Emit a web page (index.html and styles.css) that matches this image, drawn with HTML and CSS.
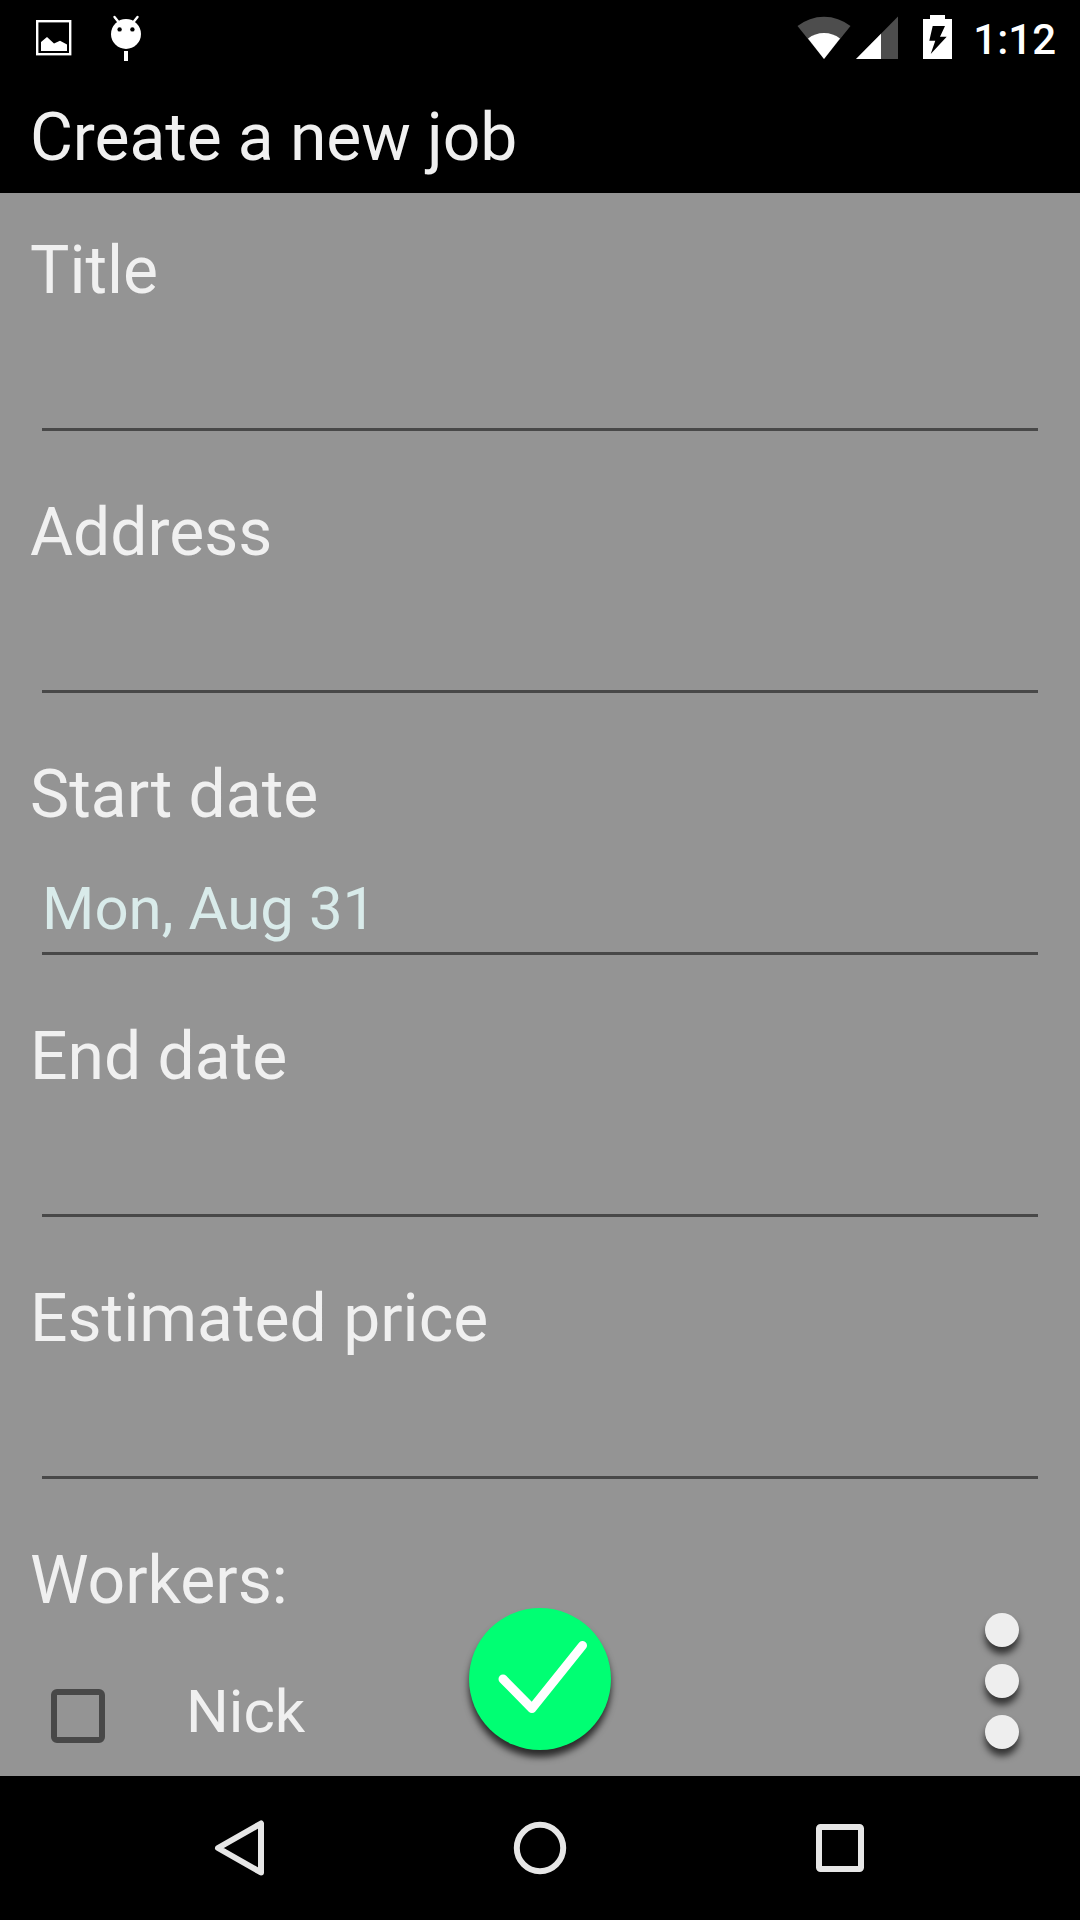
FILE: index.html
```html
<!DOCTYPE html>
<html lang="en">
<head>
  <meta charset="UTF-8">
  <meta name="viewport" content="width=device-width, initial-scale=1.0">
  <title>Create a new job</title>
  <link rel="stylesheet" href="styles.css">
</head>
<body>
  <div class="status-bar">
    <div class="status-icons">
      <svg width="36" height="72" viewBox="0 0 36 72">
        <rect x="1.2" y="21.2" width="33" height="33" fill="none" stroke="#fff" stroke-width="2.4"/>
        <path d="M5 51V42l6-5 7 6.5 6-2.8 7 3.8V51z" fill="#fff"/>
      </svg>
      <svg width="32" height="72" viewBox="0 0 32 72">
        <path d="M4.5 17l4 5M27.5 17l-4 5" stroke="#fff" stroke-width="2.4" stroke-linecap="round"/>
        <circle cx="16" cy="34" r="15" fill="#fff"/>
        <circle cx="9.6" cy="29.4" r="2.2"/>
        <circle cx="22.4" cy="29.4" r="2.2"/>
        <path d="M14 51h4v10h-4z" fill="#fff"/>
      </svg>
    </div>
    <div class="status-system">
      <svg width="54" height="72" viewBox="0 0 54 72">
        <path d="M27 59L.5 26a43 43 0 0 1 53 0z" fill="#4d4d4d"/>
        <path d="M27 59L11 38.500a26 26 0 0 1 32 0z" fill="#fff"/>
      </svg>
      <svg width="42" height="72" viewBox="0 0 42 72">
        <path d="M0 59L42 16.5V59z" fill="#4d4d4d"/>
        <path d="M0 59l25-25.3V59z" fill="#fff"/>
      </svg>
      <svg class="battery" width="29" height="72" viewBox="0 0 29 72">
        <path d="M0 19h7v-4h15v4h7v40H0z" fill="#fff"/>
        <path d="M9.7 26H22l-5 10.700h6.700L7.700 54l4.600-13.300h-6z"/>
      </svg>
      <span class="clock">1:12</span>
    </div>
  </div>

  <header class="title-bar">
    <h1>Create a new job</h1>
  </header>

  <main class="form">
    <div class="field">
      <label>Title</label>
      <div class="input"></div>
    </div>
    <div class="field">
      <label>Address</label>
      <div class="input"></div>
    </div>
    <div class="field">
      <label>Start date</label>
      <div class="input">Mon, Aug 31</div>
    </div>
    <div class="field">
      <label>End date</label>
      <div class="input"></div>
    </div>
    <div class="field">
      <label>Estimated price</label>
      <div class="input"></div>
    </div>
    <div class="workers">
      <label>Workers:</label>
      <div class="worker">
        <span class="checkbox"></span>
        <span class="worker-name">Nick</span>
      </div>
    </div>

    <!-- floating actions -->
    <button class="fab" aria-label="Save">
      <svg width="142" height="142" viewBox="0 0 142 142">
        <path d="M34 71l29 29.500L113.500 37.500" fill="none" stroke="#fff" stroke-width="9" stroke-linecap="round" stroke-linejoin="round"/>
      </svg>
    </button>
    <div class="more">
      <span></span>
      <span></span>
      <span></span>
    </div>
  </main>

  <nav class="nav-bar">
    <svg width="60" height="60" viewBox="0 0 60 60">
      <path d="M51 5.500V54.500L8 30z"/>
    </svg>
    <svg width="60" height="60" viewBox="0 0 60 60">
      <circle cx="30" cy="30" r="23.200"/>
    </svg>
    <svg width="60" height="60" viewBox="0 0 60 60">
      <rect x="9" y="9" width="42" height="42" rx="1.500"/>
    </svg>
  </nav>
</body>
</html>
```
FILE: styles.css
```css
* { margin: 0; padding: 0; box-sizing: border-box; }
body {
  font-family: Roboto, sans-serif;
  background: #000;
  color: #f0f0f0;
  width: 1080px;
  height: 1920px;
  display: flex;
  flex-direction: column;
  overflow: hidden;
}
svg { display: block; }

.status-bar {
  height: 72px;
  padding: 0 24px 0 36px;
  display: flex;
  justify-content: space-between;
}
.status-icons { display: flex; gap: 38px; }
.status-system { display: flex; gap: 5px; }
.battery { margin-left: 20px; }
.clock {
  margin-left: 16px;
  color: #fff;
  font-size: 42px;
  font-weight: 500;
  line-height: 80px;
}

.title-bar {
  height: 121px;
  padding: 27px 30px 0;
}
h1 {
  font-size: 66px;
  font-weight: 400;
  line-height: 78px;
  letter-spacing: -0.1px;
}

.form {
  position: relative;
  height: 1583px;
  background: #949494;
}
.field { padding: 39px 30px 24px; }
label {
  display: block;
  font-size: 66px;
  line-height: 78px;
}
.input {
  height: 121px;
  margin: 0 12px;
  padding-top: 39px;
  border-bottom: 3px solid #484848;
  color: #d9ebea;
  font-size: 60px;
  line-height: 72px;
}

.workers { padding: 39px 30px 0; }
.worker {
  display: flex;
  align-items: flex-start;
  padding: 56px 0 0 21px;
}
.checkbox {
  width: 54px;
  height: 54px;
  margin-top: 13px;
  border: 6px solid #484848;
  border-radius: 6px;
}
.worker-name {
  margin-left: 81px;
  font-size: 60px;
  line-height: 72px;
}

.fab {
  position: absolute;
  left: 469px;
  bottom: 26px;
  width: 142px;
  height: 142px;
  border: none;
  border-radius: 50%;
  background: #00ff73;
  box-shadow: 0 7px 7px rgba(0, 0, 0, 0.72);
}
.more {
  position: absolute;
  right: 61px;
  bottom: 27px;
  display: flex;
  flex-direction: column;
  gap: 17px;
}
.more span {
  width: 34px;
  height: 34px;
  border-radius: 50%;
  background: #eee;
  box-shadow: 0 7px 7px rgba(0, 0, 0, 0.65);
}

.nav-bar {
  height: 144px;
  padding: 0 90px;
  display: flex;
  justify-content: space-around;
  align-items: center;
}
.nav-bar svg {
  fill: none;
  stroke: #e6e6e6;
  stroke-width: 6;
  stroke-linejoin: round;
}
```
